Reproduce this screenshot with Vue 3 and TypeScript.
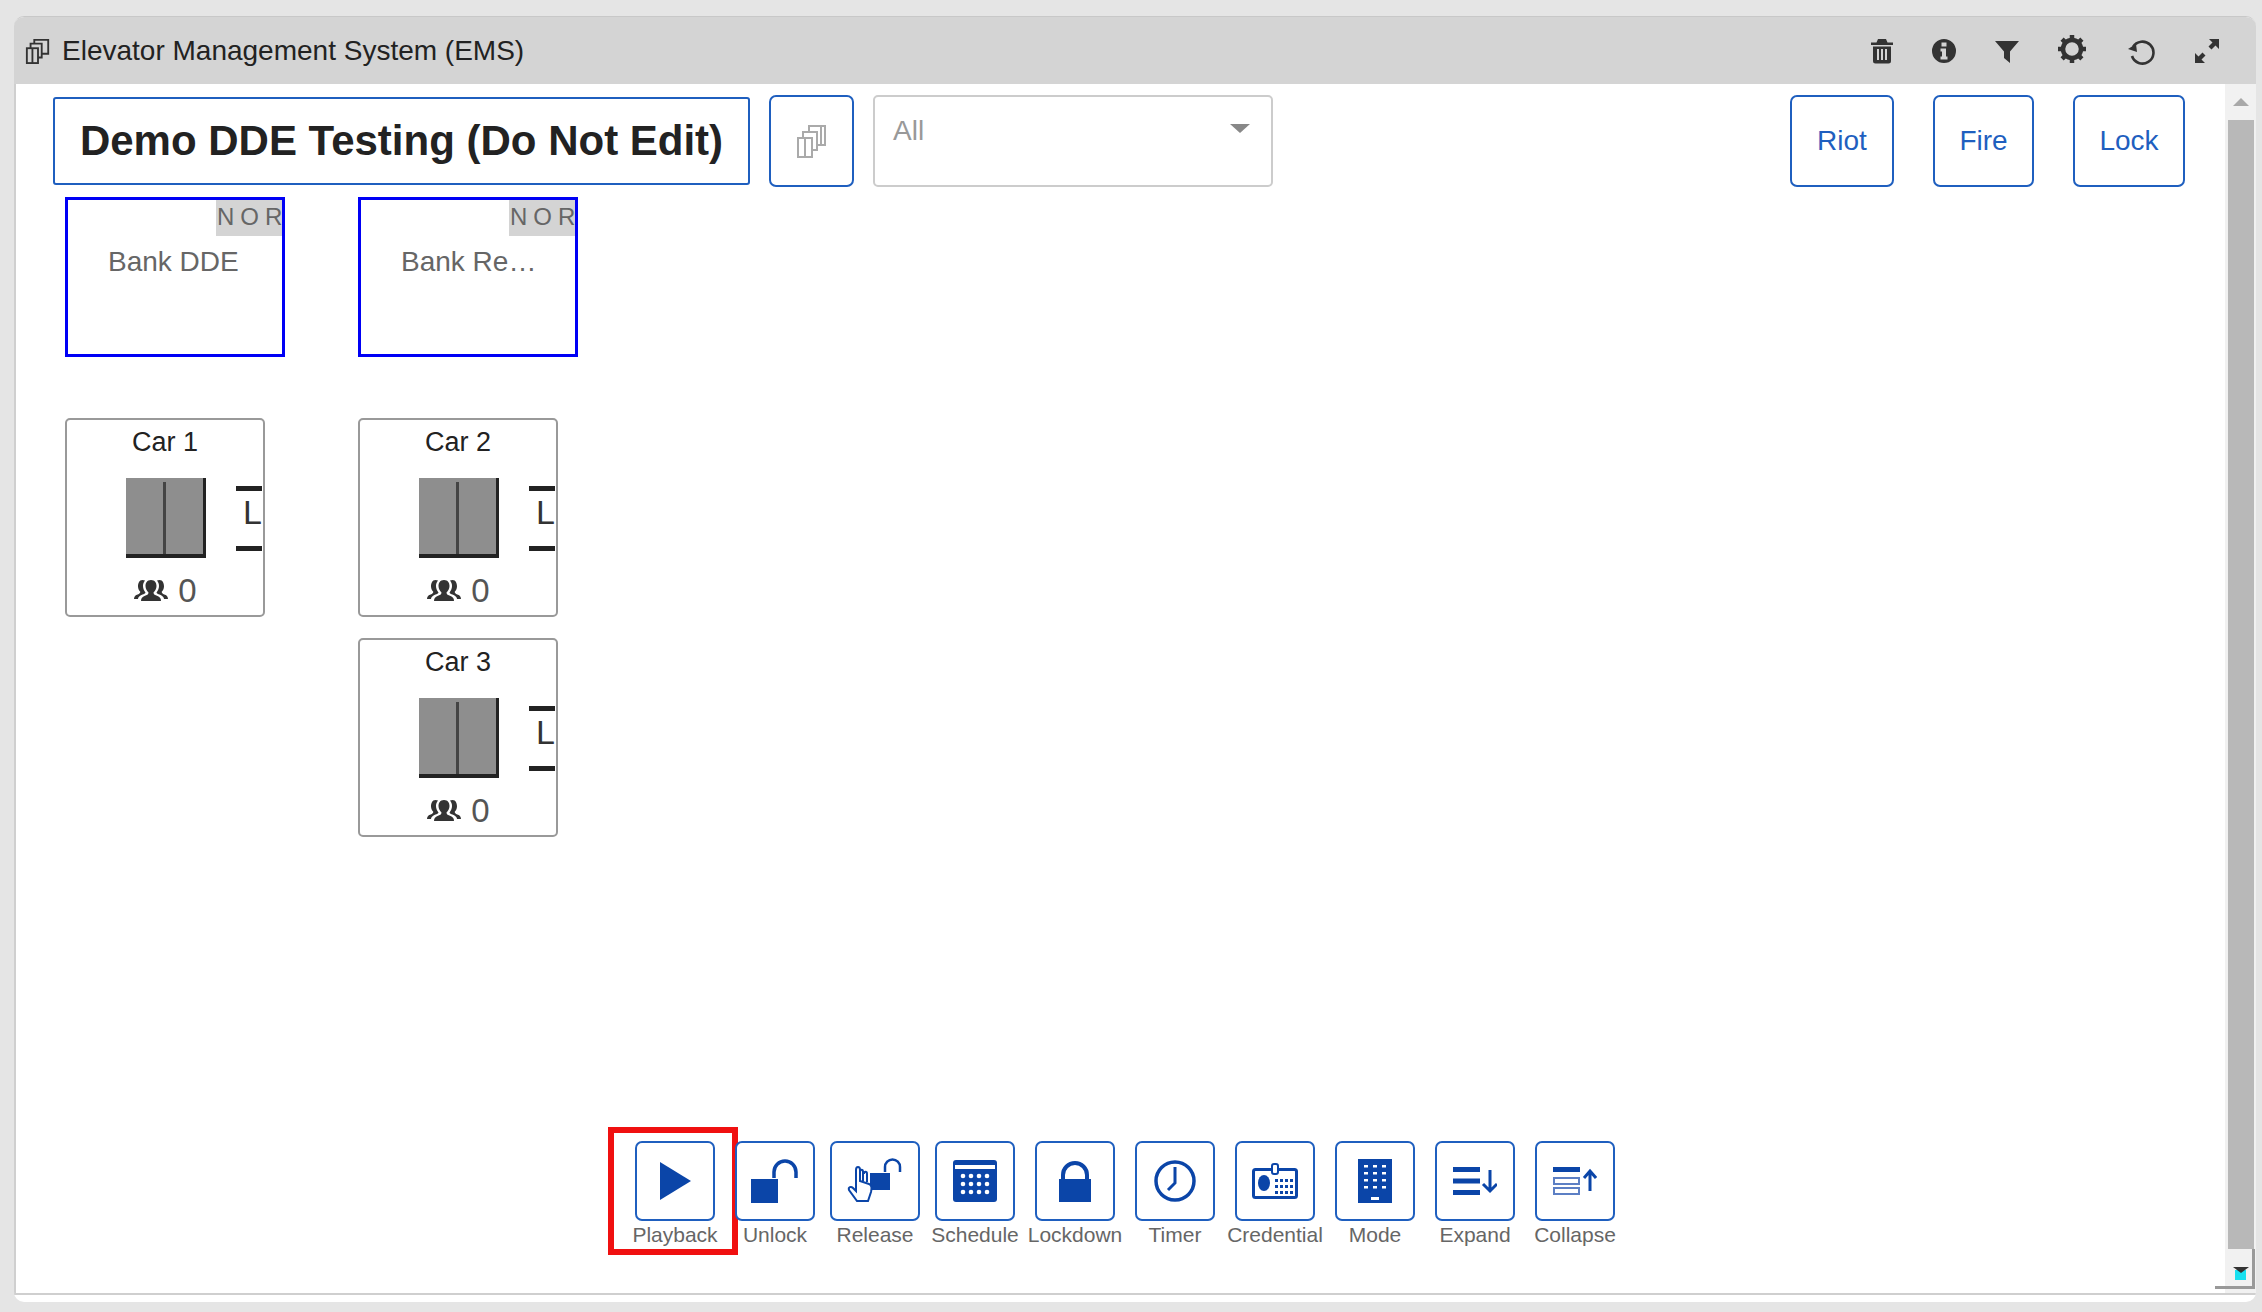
<template>
  <div class="page">
    <div class="window">
      <header class="titlebar">
        <svg class="title-icon" viewBox="0 0 28 28" fill="none" stroke="#333" stroke-width="2">
          <rect x="2" y="11" width="12" height="16" />
          <path d="M6 11V6h12v15h-4M10 6V2h12l3 0v15h-7M8 11v16" />
        </svg>
        <span class="title-text">Elevator Management System (EMS)</span>
        <div class="title-actions">
          <!-- trash -->
          <svg width="24" height="26" viewBox="0 0 24 26" fill="#333">
            <path d="M8 1h8l1.500 3.500H23V7H1V4.500h5.500zM3 8.500h18V23a2.500 2.500 0 0 1-2.500 2.500h-13A2.500 2.500 0 0 1 3 23zM7 11v11h2V11zm4 0v11h2V11zm4 0v11h2V11z" fill-rule="evenodd" />
          </svg>
          <!-- info -->
          <svg width="26" height="26" viewBox="0 0 26 26" fill="#333">
            <path fill-rule="evenodd" d="M13 1a12 12 0 1 1 0 24a12 12 0 0 1 0-24zM10.500 4.500v4h5v-4zM9.500 10.500v3h1.500v5h-1.500v3h7v-3h-1.500v-8z" />
          </svg>
          <!-- filter -->
          <svg width="26" height="26" viewBox="0 0 26 26" fill="#333">
            <path d="M1 3h24L16 13.500V25l-6-5v-6.500z" />
          </svg>
          <!-- gear -->
          <svg class="gear" width="30" height="30" viewBox="0 0 30 30" fill="none" stroke="#333">
            <circle cx="15" cy="15" r="9" stroke-width="4.500" />
            <path stroke-width="4.500" d="M15 1v5M15 24v5M1 15h5M24 15h5M5.100 5.100l3.500 3.500M21.400 21.400l3.500 3.500M5.100 24.900l3.500-3.500M21.400 8.600l3.500-3.500" />
          </svg>
          <!-- undo -->
          <svg class="undo" width="30" height="28" viewBox="0 0 30 28" fill="none" stroke="#333" stroke-width="2.600">
            <path d="M6 9a11 11 0 1 1-1 9" />
            <path d="M1 11l8-5 1 8z" fill="#333" stroke="none" />
          </svg>
          <!-- expand -->
          <svg width="26" height="26" viewBox="0 0 26 26" fill="#333">
            <path d="M15 1h10v10l-3.500-3.500-4 4-3-3 4-4zM11 25H1V15l3.500 3.500 4-4 3 3-4 4z" />
          </svg>
        </div>
      </header>

      <div class="body">
        <main class="content">
          <div class="top-row">
            <div class="site-name">Demo DDE Testing (Do Not Edit)</div>
            <button class="outline-btn copy-btn">
              <svg width="32" height="36" viewBox="0 0 32 36" fill="none" stroke="#aaa" stroke-width="2">
                <rect x="2" y="15" width="14" height="19" />
                <path d="M7 15V9h14v18h-5M9 15v19M13 9V3h16v19h-8M25 3v19" />
              </svg>
            </button>
            <div class="select">
              <span>All</span>
              <i class="caret"></i>
            </div>
            <div class="top-actions">
              <button v-for="a in alarmButtons" :key="a.label" class="outline-btn alarm-btn" :style="{ width: a.w + 'px' }">{{ a.label }}</button>
            </div>
          </div>

          <div class="banks">
            <section v-for="bank in banks" :key="bank.name" class="bank">
              <div class="bank-card">
                <span class="nor">NOR</span>
                <div class="bank-name">{{ bank.name }}</div>
              </div>
              <div v-for="car in bank.cars" :key="car" class="car">
                <div class="car-name">{{ car }}</div>
                <div class="car-door"><i></i></div>
                <div class="car-mode">
                  <b></b>
                  <span>L</span>
                  <b></b>
                </div>
                <div class="car-count">
                  <svg width="36" height="26" viewBox="0 0 36 26" fill="#333">
                    <path d="M18 2c4 0 5.500 3 5.500 6s-1.500 5-3 6.500c0 2 1.500 2.500 4 3.500 2 .8 3.500 2 3.500 5H8c0-3 1.500-4.200 3.500-5 2.500-1 4-1.500 4-3.500-1.500-1.500-3-3.500-3-6.500s1.500-6 5.500-6z" />
                    <path d="M9.500 2c1 0 1.800.2 2.500.6-1.200 1.400-2 3.300-2 5.400 0 2.500 1 4.800 2.500 6.400-.3 1-1.600 1.500-3 2.100-2.300.9-4 2-4.600 4.500H1c0-2.500 1.300-3.600 3-4.300 2-.9 3.300-1.300 3.300-3-1.300-1.300-2.300-3-2.300-5.500S6 2 9.500 2zM26.500 2c-1 0-1.800.2-2.500.6 1.200 1.400 2 3.300 2 5.400 0 2.500-1 4.800-2.500 6.400.3 1 1.600 1.500 3 2.100 2.300.9 4 2 4.600 4.500H35c0-2.500-1.300-3.600-3-4.300-2-.9-3.300-1.300-3.300-3 1.300-1.300 2.300-3 2.300-5.500S30 2 26.500 2z" />
                  </svg>
                  <span>0</span>
                </div>
              </div>
            </section>
          </div>

          <div class="toolbar">
            <div v-for="t in tools" :key="t.label" class="tool" :class="{ selected: t.label === 'Playback' }">
              <button class="outline-btn tool-btn" :class="{ wide: t.label === 'Release' }">
                <svg v-if="t.label === 'Playback'" class="play" width="34" height="40" viewBox="0 0 34 40" fill="#0b45a8">
                  <path d="M2 1l31 19L2 39z" />
                </svg>
                <svg v-else-if="t.label === 'Unlock'" width="50" height="46" viewBox="0 0 50 46">
                  <rect x="1" y="21" width="27" height="24" fill="#0b45a8" />
                  <path d="M24 20v-6a11 11 0 0 1 22 0v6" fill="none" stroke="#0b45a8" stroke-width="3.500" />
                </svg>
                <svg v-else-if="t.label === 'Release'" width="56" height="46" viewBox="0 0 56 46">
                  <rect x="23" y="15" width="20" height="17" fill="#0b45a8" />
                  <path d="M38 14V9a7.500 7.500 0 0 1 15 0v5" fill="none" stroke="#0b45a8" stroke-width="2.500" />
                  <path d="M9 12c0-4 4-4 4 0v11l9 3c3 1 3 4 2 8l-3 9H10L2 32c-1-3 2-4 4-2l3 3zM13 14c0-3 3-3 3 0v9M17 16c0-3 3-3 3 0v8" fill="#fff" stroke="#0b45a8" stroke-width="2" />
                </svg>
                <svg v-else-if="t.label === 'Schedule'" width="44" height="42" viewBox="0 0 44 42">
                  <rect width="44" height="42" rx="3" fill="#0b45a8" />
                  <rect x="2" y="5" width="40" height="4" fill="#fff" />
                  <circle v-for="d in scheduleDots" :key="d[0] + '-' + d[1]" :cx="d[0]" :cy="d[1]" r="2.300" fill="#fff" />
                </svg>
                <svg v-else-if="t.label === 'Lockdown'" width="32" height="42" viewBox="0 0 32 42">
                  <rect x="0" y="19" width="32" height="23" fill="#0b45a8" />
                  <path d="M4 20V15a12 12 0 0 1 24 0v5" fill="none" stroke="#0b45a8" stroke-width="4" />
                </svg>
                <svg v-else-if="t.label === 'Timer'" width="42" height="42" viewBox="0 0 42 42" fill="none" stroke="#0b45a8">
                  <circle cx="21" cy="21" r="19" stroke-width="3.500" />
                  <path d="M21 7v16l-7 7" stroke-width="3" />
                </svg>
                <svg v-else-if="t.label === 'Credential'" width="46" height="36" viewBox="0 0 46 36">
                  <rect x="1.500" y="6.500" width="43" height="28" rx="2" fill="#fff" stroke="#0b45a8" stroke-width="3" />
                  <ellipse cx="12" cy="20" rx="6" ry="8" fill="#0b45a8" />
                  <rect x="20" y="1" width="6" height="10" rx="2" fill="#fff" stroke="#0b45a8" stroke-width="2" />
                  <rect v-for="d in credentialDots" :key="d[0] + '-' + d[1]" :x="d[0]" :y="d[1]" width="3" height="3" fill="#0b45a8" />
                </svg>
                <svg v-else-if="t.label === 'Mode'" width="34" height="44" viewBox="0 0 34 44">
                  <rect width="34" height="44" fill="#0b45a8" />
                  <rect v-for="d in modeDots" :key="d[0] + '-' + d[1]" :x="d[0]" :y="d[1]" width="4" height="2.500" fill="#fff" />
                  <rect x="13" y="38" width="8" height="3" fill="#fff" />
                </svg>
                <svg v-else-if="t.label === 'Expand'" width="44" height="28" viewBox="0 0 44 28">
                  <path d="M0 2.500h27M0 14h27M0 25.500h27" stroke="#0b45a8" stroke-width="5" />
                  <path d="M37 3v21M30 17l7 7 7-7" fill="none" stroke="#0b45a8" stroke-width="3" />
                </svg>
                <svg v-else width="44" height="28" viewBox="0 0 44 28">
                  <rect x="0" y="0" width="27" height="5" fill="#0b45a8" />
                  <rect x="1" y="11" width="25" height="6" fill="#fff" stroke="#5c7fc4" stroke-width="2" />
                  <rect x="1" y="21" width="25" height="6" fill="#fff" stroke="#5c7fc4" stroke-width="2" />
                  <path d="M37 24V5M31 11l6-7 6 7" fill="none" stroke="#0b45a8" stroke-width="3" />
                </svg>
              </button>
              <span class="tool-label">{{ t.label }}</span>
            </div>
          </div>
        </main>

        <aside class="scrollbar">
          <i class="scroll-up"></i>
          <div class="scroll-thumb"></div>
          <div class="scroll-corner"><i></i></div>
        </aside>
      </div>
    </div>
  </div>
</template>

<script setup lang="ts">
const alarmButtons = [
  { label: 'Riot', w: 104 },
  { label: 'Fire', w: 101 },
  { label: 'Lock', w: 112 },
];

const banks = [
  { name: 'Bank DDE', cars: ['Car 1'] },
  { name: 'Bank Re…', cars: ['Car 2', 'Car 3'] },
];

const tools = ['Playback', 'Unlock', 'Release', 'Schedule', 'Lockdown', 'Timer', 'Credential', 'Mode', 'Expand', 'Collapse'].map((label) => ({ label }));

// dot positions for the small keypad style icons
const scheduleDots: number[][] = [];
for (const y of [16, 24, 32]) for (const x of [10, 18, 26, 34]) scheduleDots.push([x, y]);

const credentialDots: number[][] = [];
for (const y of [16, 22, 28]) for (const x of [23, 28, 33, 38]) credentialDots.push([x, y]);

const modeDots: number[][] = [];
for (const y of [6, 13, 20, 27]) for (const x of [6, 15, 24]) modeDots.push([x, y]);
</script>

<style>
html,
body {
  margin: 0;
  background: #e5e5e5;
}
</style>

<style scoped>
.page {
  width: 2262px;
  height: 1312px;
  box-sizing: border-box;
  padding: 16px 6px 10px 14px;
  font-family: "Liberation Sans", Arial, sans-serif;
}

.window {
  height: 100%;
  display: flex;
  flex-direction: column;
  background: #fff;
  border-radius: 10px;
  border-top: 1px solid #c8c8c8;
  padding-bottom: 7px;
  overflow: hidden;
  box-sizing: border-box;
}

.titlebar {
  height: 67px;
  flex: none;
  display: flex;
  align-items: center;
  background: #d4d4d4;
  padding: 0 36px 0 11px;
}

.title-icon {
  width: 26px;
  height: 28px;
  margin-right: 11px;
}

.title-text {
  font-size: 28px;
  color: #222;
}

.title-actions {
  margin-left: auto;
  display: flex;
  align-items: center;
  gap: 37px;
}

.gear {
  margin-top: -3px;
}

.undo {
  margin-left: 3px;
  margin-top: 2px;
}

.body {
  flex: 1;
  display: flex;
  min-height: 0;
  border-left: 2px solid #cfcfcf;
  border-bottom: 2px solid #cfcfcf;
}

.content {
  flex: 1;
  display: flex;
  flex-direction: column;
  min-width: 0;
}

.top-row {
  display: flex;
  align-items: center;
  padding: 11px 40px 0 37px;
}

.outline-btn {
  background: #fff;
  border: 2px solid #1f5fbf;
  border-radius: 7px;
  box-sizing: border-box;
  padding: 0;
  font-family: inherit;
  display: flex;
  align-items: center;
  justify-content: center;
}

.site-name {
  width: 697px;
  height: 88px;
  box-sizing: border-box;
  border: 2px solid #1f5fbf;
  border-radius: 3px;
  display: flex;
  align-items: center;
  justify-content: center;
  font-size: 42px;
  font-weight: 700;
  color: #222;
}

.copy-btn {
  width: 85px;
  height: 92px;
  margin-left: 19px;
}

.select {
  width: 400px;
  height: 92px;
  margin-left: 19px;
  box-sizing: border-box;
  border: 2px solid #ccc;
  border-radius: 5px;
  position: relative;
  padding: 18px 18px;
  font-size: 28px;
  color: #999;
}

.caret {
  position: absolute;
  right: 21px;
  top: 27px;
  border-left: 10px solid transparent;
  border-right: 10px solid transparent;
  border-top: 9px solid #888;
}

.top-actions {
  margin-left: auto;
  display: flex;
  gap: 39px;
}

.alarm-btn {
  height: 92px;
  color: #1f5fbf;
  font-size: 28px;
}

.banks {
  display: flex;
  gap: 73px;
  padding: 10px 0 0 49px;
}

.bank {
  width: 220px;
  display: flex;
  flex-direction: column;
  gap: 21px;
}

.bank-card {
  height: 160px;
  box-sizing: border-box;
  border: 3px solid #0000f5;
  position: relative;
  margin-bottom: 40px;
}

.nor {
  position: absolute;
  top: 0;
  right: 0;
  width: 65px;
  height: 36px;
  padding-left: 1px;
  background: #d4d4d4;
  color: #666;
  font-size: 24px;
  letter-spacing: 6px;
  line-height: 34px;
  text-align: left;
  white-space: nowrap;
}

.bank-name {
  margin: 46px 0 0 40px;
  font-size: 28px;
  color: #666;
}

.car {
  width: 200px;
  height: 199px;
  box-sizing: border-box;
  border: 2px solid #999;
  border-radius: 5px;
  position: relative;
  display: flex;
  flex-direction: column;
  align-items: center;
}

.car-name {
  font-size: 27px;
  color: #222;
  margin-top: 6px;
  line-height: 32px;
}

.car-door {
  width: 80px;
  height: 80px;
  margin-top: 20px;
  margin-left: 1px;
  box-sizing: border-box;
  background: #8e8e8e;
  border-right: 3px solid #222;
  border-bottom: 4px solid #222;
  position: relative;
}

.car-door i {
  position: absolute;
  left: 37px;
  top: 4px;
  bottom: 0;
  width: 3px;
  background: #444;
}

.car-mode {
  position: absolute;
  right: 1px;
  top: 66px;
  width: 26px;
  display: flex;
  flex-direction: column;
  align-items: flex-end;
}

.car-mode b {
  display: block;
  width: 26px;
  height: 5px;
  background: #222;
}

.car-mode span {
  height: 55px;
  line-height: 42px;
  font-size: 34px;
  color: #333;
  width: 19px;
}

.car-count {
  display: flex;
  align-items: center;
  gap: 9px;
  margin-top: 14px;
  font-size: 33px;
  color: #555;
}

.toolbar {
  margin-top: auto;
  margin-bottom: 45px;
  padding-left: 609px;
  display: flex;
}

.tool {
  width: 100px;
  flex: none;
  position: relative;
  display: flex;
  flex-direction: column;
  align-items: center;
}

.tool-btn {
  width: 80px;
  height: 80px;
}

.tool-btn.wide {
  width: 90px;
}

.tool-label {
  margin-top: 1px;
  font-size: 21px;
  line-height: 26px;
  color: #666;
  white-space: nowrap;
}

.selected::after {
  content: "";
  position: absolute;
  left: -17px;
  top: -14px;
  width: 130px;
  height: 128px;
  box-sizing: border-box;
  border: 6px solid #f01010;
}

.scrollbar {
  width: 31px;
  flex: none;
  background: #f1f1f1;
  position: relative;
  display: flex;
  flex-direction: column;
  align-items: center;
}

.scroll-up {
  margin-top: 14px;
  border-left: 8px solid transparent;
  border-right: 8px solid transparent;
  border-bottom: 8px solid #a8a8a8;
}

.scroll-thumb {
  margin: 14px 0 0 1px;
  width: 26px;
  flex: 1;
  background: #b8b8b8;
}

.scroll-corner {
  height: 44px;
  width: 100%;
  position: relative;
}

.scroll-corner::before {
  content: "";
  position: absolute;
  right: 1px;
  bottom: 4px;
  width: 40px;
  height: 40px;
  box-sizing: border-box;
  border-right: 3px solid #999;
  border-bottom: 3px solid #999;
}

.scroll-corner::after {
  content: "";
  position: absolute;
  right: 10px;
  bottom: 13px;
  width: 11px;
  height: 10px;
  background: #18e0f0;
}

.scroll-corner i {
  position: absolute;
  right: 7px;
  bottom: 20px;
  border-left: 8px solid transparent;
  border-right: 8px solid transparent;
  border-top: 6px solid #333;
  z-index: 1;
}
</style>
